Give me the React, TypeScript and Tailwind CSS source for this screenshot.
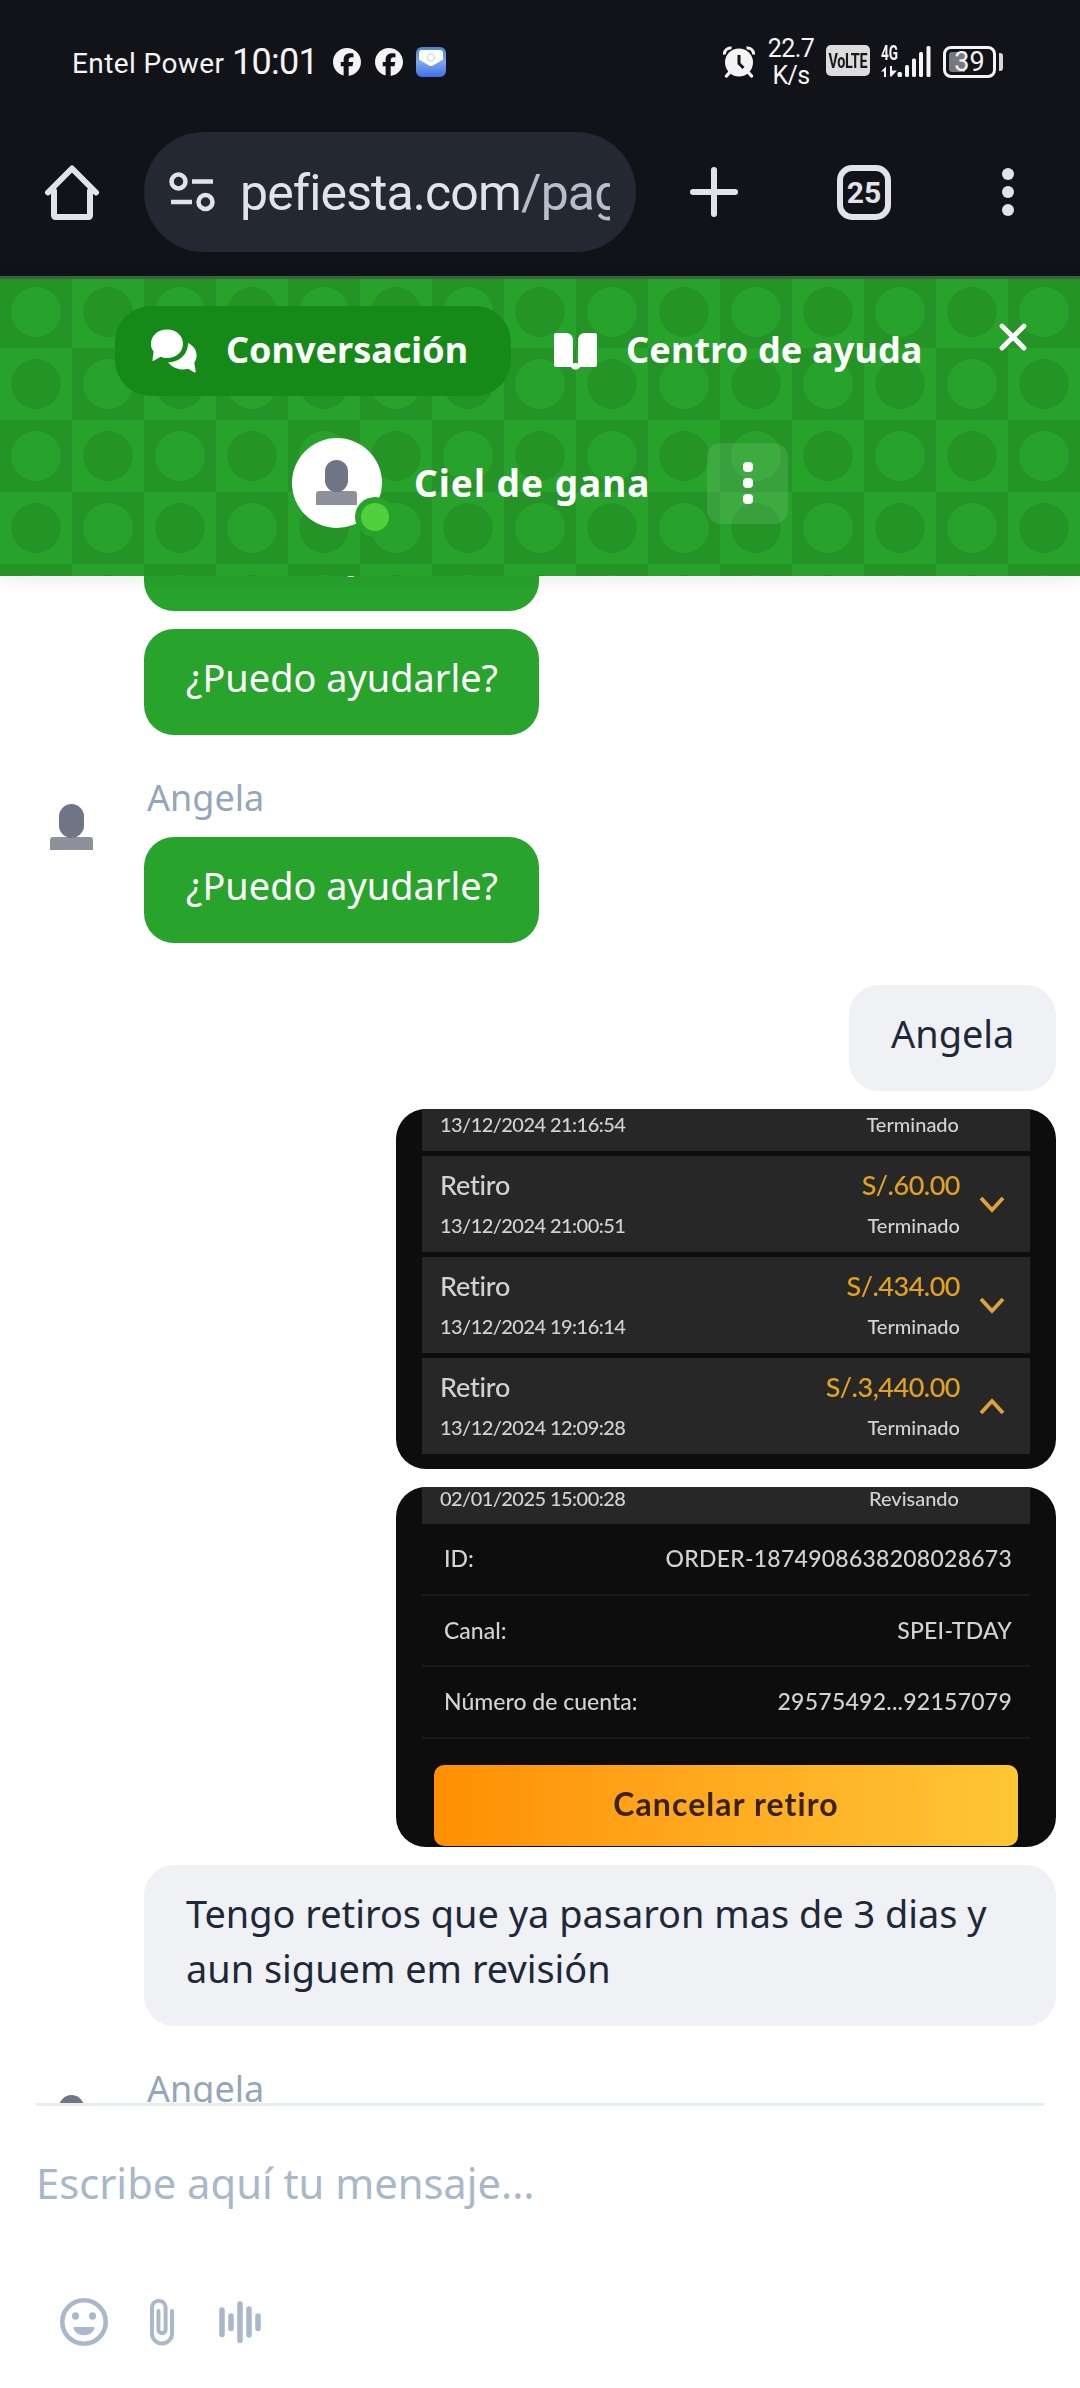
import React from 'react';
import { FaFacebook } from 'react-icons/fa6';

type Withdrawal = {
   date: string;
   amount: string;
   open?: boolean;
};

const withdrawals: Withdrawal[] = [
   { date: '13/12/2024 21:00:51', amount: 'S/.60.00' },
   { date: '13/12/2024 19:16:14', amount: 'S/.434.00' },
   { date: '13/12/2024 12:09:28', amount: 'S/.3,440.00', open: true },
];

const orderDetails = [
   { label: 'ID:', value: 'ORDER-1874908638208028673' },
   { label: 'Canal:', value: 'SPEI-TDAY' },
   { label: 'Número de cuenta:', value: '29575492...92157079' },
];

const AlarmIcon: React.FC = () => (
   <svg className="w-8 h-8" viewBox="0 0 32 32" fill="none">
      <path
         d="M1.5 8.5a6 6 0 0 1 7-6.5M30.5 8.5a6 6 0 0 0-7-6.5"
         stroke="#f4f4f4"
         strokeWidth="3"
      />
      <path
         d="M7 26l-3.5 4M25 26l3.5 4"
         stroke="#f4f4f4"
         strokeWidth="3.4"
         strokeLinecap="round"
      />
      <circle cx="16" cy="16.5" r="14" fill="#f4f4f4" />
      <path d="M16 9v8.5l4.500 4.500" stroke="#121318" strokeWidth="3" />
   </svg>
);

const MailIcon: React.FC = () => (
   <svg className="w-[30px] h-[30px]" viewBox="0 0 30 30">
      <defs>
         <linearGradient id="mail" x1="0" y1="0" x2="0" y2="1">
            <stop offset="0" stopColor="#4a86cf" />
            <stop offset="0.5" stopColor="#7fa6ee" />
            <stop offset="1" stopColor="#3f6fea" />
         </linearGradient>
      </defs>
      <rect width="30" height="30" rx="6" fill="url(#mail)" />
      <path d="M3 6q0-3 3-3h18q3 0 3 3v6.500L17 18.500q-2 1.200-4 0L3 12.500z" fill="#fff" />
      <circle cx="15" cy="10.500" r="3.500" fill="none" stroke="#cfdcf3" strokeWidth="1.500" />
   </svg>
);

const SignalIcon: React.FC = () => (
   <svg className="w-[50px] h-8" viewBox="0 0 50 32" fill="#f4f4f4">
      <path d="M0 25.500l5-5V31H3v-5.500zM9 20h2v4.500l5 0L10.500 30.500H9z" />
      <rect x="16.500" y="26" width="4.500" height="5" rx="1.500" />
      <rect x="24" y="19" width="4" height="12" rx="1.500" />
      <rect x="31" y="12.500" width="4" height="18.500" rx="1.500" />
      <rect x="38" y="6" width="4" height="25" rx="1.500" />
      <rect x="45.500" y="0" width="4" height="31" rx="1.500" />
   </svg>
);

const StatusBar: React.FC = () => (
   <div className="h-[124px] flex items-start pl-[72px] pr-[76px] text-[#f4f4f4] font-['Roboto',sans-serif]">
      <div className="flex items-center mt-[44px] h-9">
         <span className="w-[160px] text-[28px] leading-9 pt-1 tracking-[0.4px] whitespace-nowrap">
            Entel Power
         </span>
         <span className="w-[101px] text-[36px] leading-9 tracking-[-0.7px]">10:01</span>
         <FaFacebook className="w-7 h-7 mr-[14px]" />
         <FaFacebook className="w-7 h-7 mr-[13px]" />
         <MailIcon />
      </div>
      <div className="ml-auto flex items-start">
         <div className="mt-[46px]">
            <AlarmIcon />
         </div>
         <div className="w-[60px] ml-[6px] mt-[35px] text-center text-[25px] leading-[27px] tracking-[-0.6px]">
            <p>22.7</p>
            <p>K/s</p>
         </div>
         <div className="mt-[45px] ml-[5px] w-[44px] h-[31px] rounded-[5px] bg-[#dcdcdc] flex items-center justify-center">
            <span className="text-[#17181c] text-[20px] font-bold leading-none scale-x-[0.72] tracking-[-0.5px]">
               VoLTE
            </span>
         </div>
         <div className="relative mt-[46px] ml-[11px]">
            <SignalIcon />
            <span className="absolute left-0 -top-1 text-[20px] leading-[22px] font-bold origin-left scale-x-[0.68]">
               4G
            </span>
         </div>
         <div className="mt-[46px] ml-[12px] mr-px flex items-center gap-[3px]">
            <div className="relative w-[53px] h-[32px] rounded-[8px] border-[3px] border-[#f4f4f4] flex items-center justify-center">
               <span className="absolute left-[3px] top-[3px] w-[16px] h-5 rounded-l-[3px] bg-[#77787c]" />
               <span className="relative text-[27px] leading-none">39</span>
            </div>
            <span className="w-1 h-[18px] rounded-r-[3px] bg-[#d8d8d8]" />
         </div>
      </div>
   </div>
);

const BrowserBar: React.FC = () => (
   <div className="h-[152px] flex items-start pt-2 text-[#e2e3ea]">
      <svg className="w-[56px] h-[58px] ml-11 mt-8" viewBox="0 0 56 58" fill="none">
         <path
            d="M4 28.500L28 4.500l24 24M10 27v24q0 2 2 2h32q2 0 2-2V27"
            stroke="#e2e3ea"
            strokeWidth="6"
            strokeLinecap="round"
            strokeLinejoin="round"
         />
      </svg>
      <div className="ml-11 w-[492px] h-[120px] rounded-full bg-[#232832] flex items-center pl-[25px] pr-6">
         <svg className="w-[46px] h-10 shrink-0" viewBox="0 0 46 40" fill="none" stroke="#e2e3ea" strokeWidth="4.500">
            <circle cx="9.500" cy="9.500" r="7" />
            <path d="M23 9.500h21M2 30h21" />
            <circle cx="36.500" cy="30" r="7" />
         </svg>
         <div className="ml-[25px] w-[370px] overflow-hidden whitespace-nowrap font-['Roboto',sans-serif] text-[50px] leading-[70px] pt-0.5 tracking-[-0.9px]">
            <span>pefiesta.com</span>
            <span className="text-[#b9bdc9]">/pag</span>
         </div>
      </div>
      <svg className="w-12 h-[50px] ml-[54px] mt-[35px]" viewBox="0 0 48 50">
         <path d="M24 3v44M3 25h42" stroke="#e2e3ea" strokeWidth="6" strokeLinecap="round" />
      </svg>
      <div className="ml-[99px] mt-[33px] w-[54px] h-[55px] rounded-[15px] border-[6px] border-[#e2e3ea] flex items-center justify-center">
         <span className="font-['Roboto',sans-serif] font-bold text-[30px] leading-none">25</span>
      </div>
      <div className="ml-[111px] mt-[36px] flex flex-col gap-[6px]">
         <span className="w-3 h-3 rounded-full bg-[#e2e3ea]" />
         <span className="w-3 h-3 rounded-full bg-[#e2e3ea]" />
         <span className="w-3 h-3 rounded-full bg-[#e2e3ea]" />
      </div>
   </div>
);

// checkered tiles with a dot in each one
const HeaderPattern: React.FC = () => (
   <svg className="absolute inset-0 w-full h-full">
      <defs>
         <pattern id="tiles" width="144" height="144" patternUnits="userSpaceOnUse">
            <rect width="144" height="144" fill="#27a22b" />
            <rect width="72" height="72" fill="#249427" />
            <rect x="72" y="72" width="72" height="72" fill="#249427" />
            <circle cx="36" cy="36" r="25" fill="#27a22b" />
            <circle cx="108" cy="108" r="25" fill="#27a22b" />
            <circle cx="108" cy="36" r="25" fill="#249427" />
            <circle cx="36" cy="108" r="25" fill="#249427" />
         </pattern>
      </defs>
      <rect width="100%" height="100%" fill="url(#tiles)" />
   </svg>
);

const ChatHeader: React.FC = () => (
   <header className="relative z-10 h-[300px] shadow-[0_4px_18px_rgba(0,0,0,0.08)] text-white font-bold">
      <HeaderPattern />
      <div className="relative h-[3px] bg-[#3b6340]" />
      <nav className="relative flex items-center h-[90px] mt-[27px] pl-[115px] pr-[53px] text-[36px] leading-[50px]">
         <div className="w-[396px] h-[90px] rounded-[36px] bg-[#168a18] flex items-center pl-[36px]">
            <svg className="w-[46px] h-[44px]" viewBox="0 0 46 44" fill="#fff">
               <path d="M16 .5c9 0 16 6 16 14.300S25 29 16 29c-2.400 0-4.500-.3-6.300-1.200L2.300 32c-.6.300-1-.2-.8-.8L2.600 22.500C.8 20.300 0 17.800 0 14.800 0 6.500 7 .5 16 .5z" />
               <path d="M37 14c5.400 2.600 8.600 7 8.600 12.300 0 2.700-.8 5.200-2.300 7.300l1.400 9c.1.900-.5 1.200-1.200.8l-6.400-3.700c-2 .6-4 .9-6 .7-6-.3-11.200-2.900-14-7.100 10.500 0 20-7.200 19.900-19.300z" />
            </svg>
            <span className="ml-[29px] pb-0.5">Conversación</span>
         </div>
         <div className="flex items-center ml-[43px]">
            <svg className="w-[43px] h-[37px]" viewBox="0 0 43 37" fill="#fff">
               <path d="M0 2q0-2 2-2h10q7 0 7 8v27l-2-1H2q-2 0-2-2z" />
               <path d="M43 2q0-2-2-2H31q-7 0-7 8v27l2-1h15q2 0 2-2z" />
               <path d="M17 34q2-1 2.500-4h4q.5 3 2.500 4-1.500 2.800-4.500 2.800T17 34z" />
            </svg>
            <span className="ml-[29px] pb-0.5 tracking-[0.15px] whitespace-nowrap">
               Centro de ayuda
            </span>
         </div>
         <svg className="w-7 h-7 ml-auto self-start mt-[17px]" viewBox="0 0 28 28">
            <path d="M3 3l22 22M25 3L3 25" stroke="#fff" strokeWidth="4.800" strokeLinecap="round" />
         </svg>
      </nav>
      <div className="relative flex items-center h-[90px] mt-[42px] pl-[292px]">
         <div className="relative w-[90px] h-[90px] rounded-full bg-white">
            <svg className="absolute left-[24px] top-[22px] w-[41px] h-[45px]" viewBox="0 0 41 45">
               <path d="M0 34q0-3 3-3h35q3 0 3 3v11H0z" fill="#8e909e" />
               <rect x="9" width="23" height="32" rx="11.500" fill="#6f7585" />
            </svg>
            <span className="absolute left-[63px] top-[59px] w-[40px] h-[40px] rounded-full bg-[#27a22b] flex items-center justify-center">
               <span className="w-7 h-7 rounded-full bg-[#50d03d]" />
            </span>
         </div>
         <span className="w-[293px] ml-8 text-[37px] leading-[50px] tracking-[1px] whitespace-nowrap">
            Ciel de gana
         </span>
         <div className="w-[81px] h-[81px] rounded-[14px] bg-white/10 flex flex-col items-center justify-center gap-[6px]">
            <span className="w-[10px] h-[10px] rounded-[4px] bg-white" />
            <span className="w-[10px] h-[10px] rounded-[4px] bg-white" />
            <span className="w-[10px] h-[10px] rounded-[4px] bg-white" />
         </div>
      </div>
   </header>
);

const AgentBubble: React.FC<{ text: string }> = ({ text }) => (
   <div className="w-[395px] h-[106px] rounded-[30px] bg-[#28a42c] pt-[21px] pl-[42px] text-white text-[37.9px] leading-[55px] whitespace-nowrap">
      {text}
   </div>
);

const AgentGroup: React.FC<{ name: string; children?: React.ReactNode }> = ({
   name,
   children,
}) => (
   <div className="flex items-start pt-[42px]">
      <svg className="w-[43px] h-[46px] ml-[50px] mt-[27px] shrink-0" viewBox="0 0 43 46">
         <path d="M0 36q0-3 3-3h37q3 0 3 3v10H0z" fill="#8e909e" />
         <rect x="9" width="25" height="34" rx="12.500" fill="#6f7585" />
      </svg>
      <div className="ml-[51px]">
         <p className="h-[60px] pl-[3px] text-[36px] leading-[41px] text-[#93a6bb]">{name}</p>
         {children}
      </div>
   </div>
);

const Chevron: React.FC<{ up?: boolean }> = ({ up }) => (
   <svg className="w-[26px] h-[17px]" viewBox="0 0 26 17" fill="none">
      <path
         d={up ? 'M2 15L13 3l11 12' : 'M2 2l11 12L24 2'}
         stroke="#e0a33a"
         strokeWidth="3.8"
      />
   </svg>
);

// frame of an attached photo, the photos are low resolution
const Picture: React.FC<{ children: React.ReactNode }> = ({ children }) => (
   <div className="w-[660px] h-[360px] rounded-[30px] overflow-hidden bg-[#0d0d0d]">
      <div className="px-[26px] blur-[0.6px] text-[#d2d2d2] font-['Lato',sans-serif] font-medium">
         {children}
      </div>
   </div>
);

const WithdrawalsPicture: React.FC = () => (
   <Picture>
      <div className="h-[42px] bg-[#272727] flex justify-between pl-[18px] pr-[71px] text-[20px] leading-[31px]">
         <span className="tracking-[-0.55px]">13/12/2024 21:16:54</span>
         <span>Terminado</span>
      </div>
      {withdrawals.map(item => (
         <div
            key={item.date}
            className="mt-[5px] h-[96px] bg-[#272727] flex items-center pl-[18px] pr-[25px]"
         >
            <div className="flex-1">
               <p className="text-[27px] leading-[42px] tracking-[-0.2px]">Retiro</p>
               <p className="text-[20px] leading-[38px] tracking-[-0.55px]">{item.date}</p>
            </div>
            <div className="text-right mr-[19px]">
               <p className="text-[27px] leading-[42px] tracking-[-0.5px] text-[#e2a21f]">
                  {item.amount}
               </p>
               <p className="text-[20px] leading-[38px]">Terminado</p>
            </div>
            <Chevron up={item.open} />
         </div>
      ))}
   </Picture>
);

const OrderPicture: React.FC = () => (
   <Picture>
      <div className="h-[37px] bg-[#272727] flex justify-between pl-[18px] pr-[71px] text-[20px] leading-[23px]">
         <span className="tracking-[-0.55px]">02/01/2025 15:00:28</span>
         <span>Revisando</span>
      </div>
      {orderDetails.map(row => (
         <div
            key={row.label}
            className="h-[71.500px] border-b-2 border-[#191919] flex items-center justify-between pl-[22px] pr-[18px] text-[23px]"
         >
            <span>{row.label}</span>
            <span className="tracking-[0.25px]">{row.value}</span>
         </div>
      ))}
      <div className="mx-3 mt-[26px] h-[81px] pb-1 rounded-[10px] bg-linear-to-r from-[#ff8f00] to-[#ffc633] flex items-center justify-center text-[32px] tracking-[1.1px] font-bold text-[#3a2208]">
         Cancelar retiro
      </div>
   </Picture>
);

const Composer: React.FC = () => (
   <div className="mx-9 h-[285px] border-t-[3px] border-[#e8eeee]">
      <p className="pt-[47px] text-[41.7px] leading-[60px] text-[#a9b8c9] whitespace-nowrap">
         Escribe aquí tu mensaje...
      </p>
      <div className="flex items-center mt-[85px] ml-6">
         <svg className="w-12 h-12" viewBox="0 0 48 48" fill="#a9b8cb">
            <circle cx="24" cy="24" r="21.700" fill="none" stroke="#a9b8cb" strokeWidth="4.600" />
            <ellipse cx="15.500" cy="18" rx="3.500" ry="3.700" />
            <ellipse cx="32.500" cy="18" rx="3.500" ry="3.700" />
            <path d="M14.500 29h19q1.500 0 1 1.500C33 35 29 37.200 24 37.200S15 35 13.500 30.500q-.5-1.500 1-1.500z" />
         </svg>
         <svg className="w-6 h-12 ml-[42px]" viewBox="0 0 24 48" fill="none">
            <path
               d="M22 13v22.500a10 10 0 0 1-20 0V9.500a6.800 6.800 0 0 1 13.600 0v22a3.600 3.600 0 0 1-7.200 0V13"
               stroke="#a9b8cb"
               strokeWidth="4"
               strokeLinecap="round"
            />
         </svg>
         <svg className="w-[42px] h-12 ml-[45px]" viewBox="0 0 42 48">
            <path
               d="M3 12v24.500M12 18v12.500M21 6v36.500M30 11v26M39 18v12.500"
               stroke="#a9b8cb"
               strokeWidth="5.500"
               strokeLinecap="round"
            />
         </svg>
      </div>
   </div>
);

const App: React.FC = () => {
   return (
      <div className="w-[1080px] h-[2388px] bg-white overflow-hidden font-['Noto_Sans',sans-serif]">
         <div className="bg-[#121318]">
            <StatusBar />
            <BrowserBar />
         </div>
         <ChatHeader />
         <main className="h-[1527px] overflow-hidden">
            <div className="ml-36 -mt-[71px] flex flex-col gap-[18px]">
               <AgentBubble text="¿Puedo ayudarle?" />
               <AgentBubble text="¿Puedo ayudarle?" />
            </div>
            <AgentGroup name="Angela">
               <AgentBubble text="¿Puedo ayudarle?" />
            </AgentGroup>
            <div className="mt-[42px] ml-36 mr-6 flex flex-col items-end gap-[18px] text-[#1d2939] text-[37.9px] leading-[55px]">
               <div className="w-[207px] h-[106px] rounded-[30px] bg-[#eff1f5] pt-[21px] pl-[42px]">
                  Angela
               </div>
               <WithdrawalsPicture />
               <OrderPicture />
               <div className="w-full h-[161px] rounded-[30px] bg-[#eff1f5] pt-[21px] pl-[42px] whitespace-nowrap">
                  Tengo retiros que ya pasaron mas de 3 dias y
                  <br />
                  aun siguem em revisión
               </div>
            </div>
            <AgentGroup name="Angela" />
         </main>
         <Composer />
      </div>
   );
};

export default App;
